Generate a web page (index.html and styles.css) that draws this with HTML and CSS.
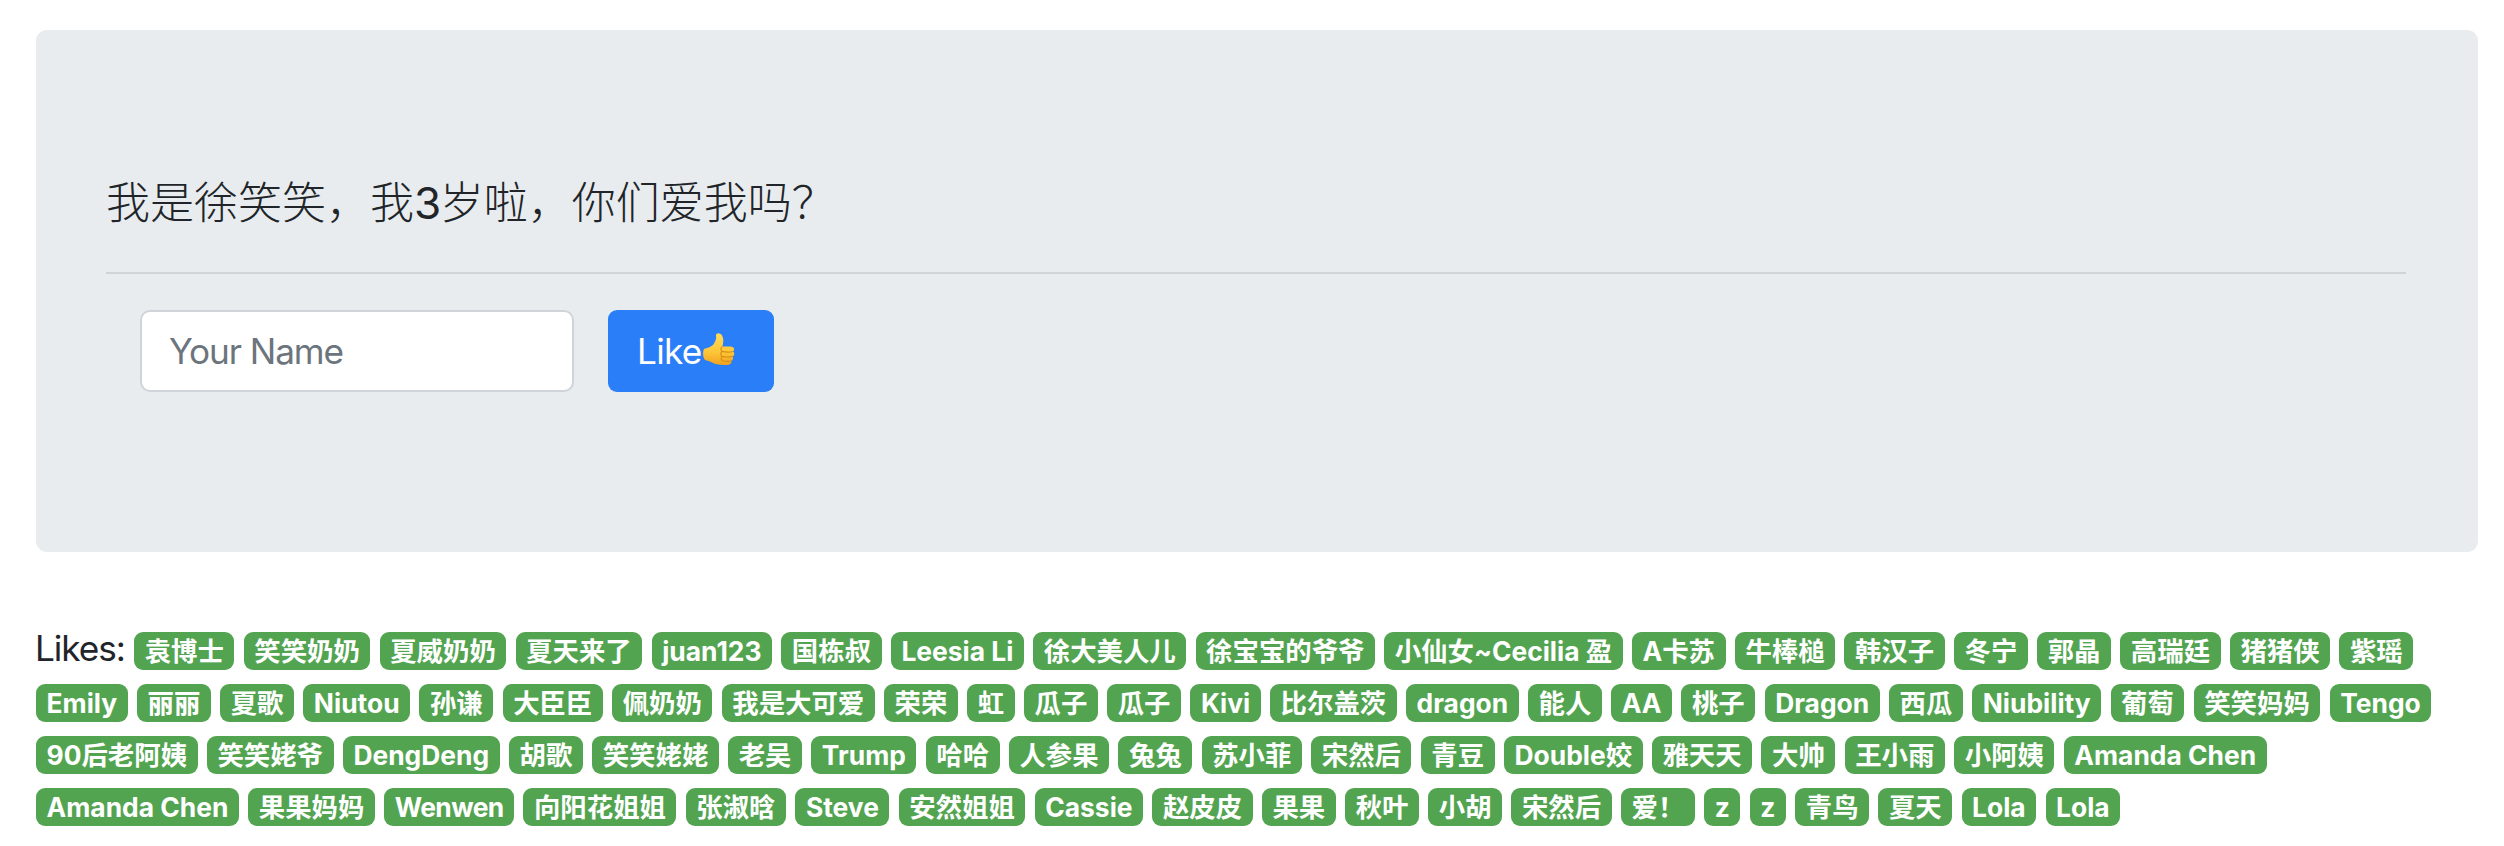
FILE: index.html
```
<!DOCTYPE html>
<html lang="zh-CN">
<head>
<meta charset="utf-8">
<title>Likes</title>
<link rel="stylesheet" href="styles.css">
</head>
<body>
<main class="container">
<section class="jumbotron">
<p class="lead">我是徐笑笑，我<span class="age">3</span>岁啦，你们爱我吗？</p>
<hr class="rule">
<form class="like-form">
<input class="name-input" type="text" placeholder="Your Name">
<button class="like-button" type="button"><span class="like-label">Like</span><svg class="thumb" viewBox="0 0 44 44" aria-hidden="true">
<defs><linearGradient id="skin" x1="0" y1="0" x2="0" y2="1"><stop offset="0" stop-color="#ffdc5a"/><stop offset="0.6" stop-color="#fdc638"/><stop offset="1" stop-color="#f0a11e"/></linearGradient></defs>
<path d="M3 20C6 19 11 18 13 14.5C15 11 15.500 10 15 6.500C15 3.200 20 3.500 21.500 7.500C23 11 22 14 21.500 17.500H29.500C33.500 17.500 34 21.500 32 22.300C34 24 33.500 27 31.600 27.400C32.600 29.500 32 31.300 30.200 31.800C31 34.500 29 36 25.500 36C17 36 13 35 9 32.500L4 31C1.700 28 1.700 23 3 20Z" fill="url(#skin)"/>
<path d="M32 22.500C28 23.500 24 23 21 22.300M31.600 27.400C28 28.300 24 28 21 27.300M30.200 31.900C27 32.700 24 32.600 21.500 31.800M21.500 17.500C19.500 18.500 19.500 21 21 22.300C19.500 24 19.700 26 21 27.300C20 29 20 30.800 21.500 31.800" stroke="#d98f17" stroke-width="1.200" fill="none"/>
</svg></button>
</form>
</section>
<p class="likes"><span class="likes-label">Likes:</span>
<span class="badge">袁博士</span>
<span class="badge">笑笑奶奶</span>
<span class="badge">夏威奶奶</span>
<span class="badge">夏天来了</span>
<span class="badge">juan123</span>
<span class="badge">国栋叔</span>
<span class="badge">Leesia Li</span>
<span class="badge">徐大美人儿</span>
<span class="badge">徐宝宝的爷爷</span>
<span class="badge">小仙女~Cecilia 盈</span>
<span class="badge">A卡苏</span>
<span class="badge">牛棒槌</span>
<span class="badge">韩汉子</span>
<span class="badge">冬宁</span>
<span class="badge">郭晶</span>
<span class="badge">高瑞廷</span>
<span class="badge">猪猪侠</span>
<span class="badge">紫瑶</span>
<br>
<span class="badge">Emily</span>
<span class="badge">丽丽</span>
<span class="badge">夏歌</span>
<span class="badge">Niutou</span>
<span class="badge">孙谦</span>
<span class="badge">大臣臣</span>
<span class="badge">佩奶奶</span>
<span class="badge">我是大可爱</span>
<span class="badge">荣荣</span>
<span class="badge">虹</span>
<span class="badge">瓜子</span>
<span class="badge">瓜子</span>
<span class="badge">Kivi</span>
<span class="badge">比尔盖茨</span>
<span class="badge">dragon</span>
<span class="badge">能人</span>
<span class="badge">AA</span>
<span class="badge">桃子</span>
<span class="badge">Dragon</span>
<span class="badge">西瓜</span>
<span class="badge">Niubility</span>
<span class="badge">葡萄</span>
<span class="badge">笑笑妈妈</span>
<span class="badge">Tengo</span>
<br>
<span class="badge">90后老阿姨</span>
<span class="badge">笑笑姥爷</span>
<span class="badge">DengDeng</span>
<span class="badge">胡歌</span>
<span class="badge">笑笑姥姥</span>
<span class="badge">老吴</span>
<span class="badge">Trump</span>
<span class="badge">哈哈</span>
<span class="badge">人参果</span>
<span class="badge">兔兔</span>
<span class="badge">苏小菲</span>
<span class="badge">宋然后</span>
<span class="badge">青豆</span>
<span class="badge">Double姣</span>
<span class="badge">雅天天</span>
<span class="badge">大帅</span>
<span class="badge">王小雨</span>
<span class="badge">小阿姨</span>
<span class="badge">Amanda Chen</span>
<br>
<span class="badge">Amanda Chen</span>
<span class="badge">果果妈妈</span>
<span class="badge tight">Wenwen</span>
<span class="badge">向阳花姐姐</span>
<span class="badge">张淑晗</span>
<span class="badge">Steve</span>
<span class="badge">安然姐姐</span>
<span class="badge">Cassie</span>
<span class="badge">赵皮皮</span>
<span class="badge">果果</span>
<span class="badge">秋叶</span>
<span class="badge">小胡</span>
<span class="badge">宋然后</span>
<span class="badge">爱！</span>
<span class="badge">z</span>
<span class="badge">z</span>
<span class="badge">青鸟</span>
<span class="badge">夏天</span>
<span class="badge">Lola</span>
<span class="badge">Lola</span>
</p>
</main>
</body>
</html>
```
FILE: styles.css
```
* { box-sizing: border-box; }
body {
  margin: 0;
  background: #fff;
  color: #212529;
  font-family: Inter, "Noto Sans CJK SC", sans-serif;
  font-size: 35.2px;
  line-height: 52px;
  overflow: hidden;
}
.container { padding: 30px 26px 0 36px; }
.jumbotron {
  height: 522px;
  padding: 140px 72px 0 70px;
  border-radius: 11px;
  background: #e8ecef;
}
.lead {
  margin: 0;
  font-size: 44px;
  font-weight: 300;
  line-height: 66px;
}
.age {
  font-weight: 400;
  letter-spacing: -1.5px;
}
.rule {
  margin: 36px 0 36px;
  border: 0;
  border-top: 2px solid #d1d4d7;
}
.like-form {
  display: flex;
  gap: 34px;
  padding-left: 34px;
}
.name-input {
  width: 434px;
  height: 82px;
  padding: 0 27px;
  border: 2px solid #ced4da;
  border-radius: 10px;
  background: #fff;
  font: inherit;
  letter-spacing: -1.1px;
}
.name-input::placeholder { color: #6c757d; opacity: 1; }
.like-button {
  display: flex;
  align-items: center;
  width: 166px;
  height: 82px;
  padding: 0 0 0 29px;
  border: 0;
  border-radius: 9px;
  background: #2a7ef8;
  color: #fff;
  font: inherit;
}
.like-label {
  width: 64px;
  text-align: left;
  letter-spacing: -0.7px;
}
.thumb { width: 44px; height: 44px; }
.likes {
  margin: 70px 0 0;
  white-space: nowrap;
  word-spacing: -0.6px;
}
.likes-label {
  margin-left: -1px;
  letter-spacing: -1.05px;
}
.badge {
  display: inline-block;
  height: 38px;
  padding: 0 10.56px;
  border-radius: 9px;
  background: #53a451;
  color: #fff;
  font-size: 26.4px;
  font-weight: 700;
  line-height: 38px;
  vertical-align: baseline;
  word-spacing: 0;
}
.tight { letter-spacing: -0.6px; }
```
